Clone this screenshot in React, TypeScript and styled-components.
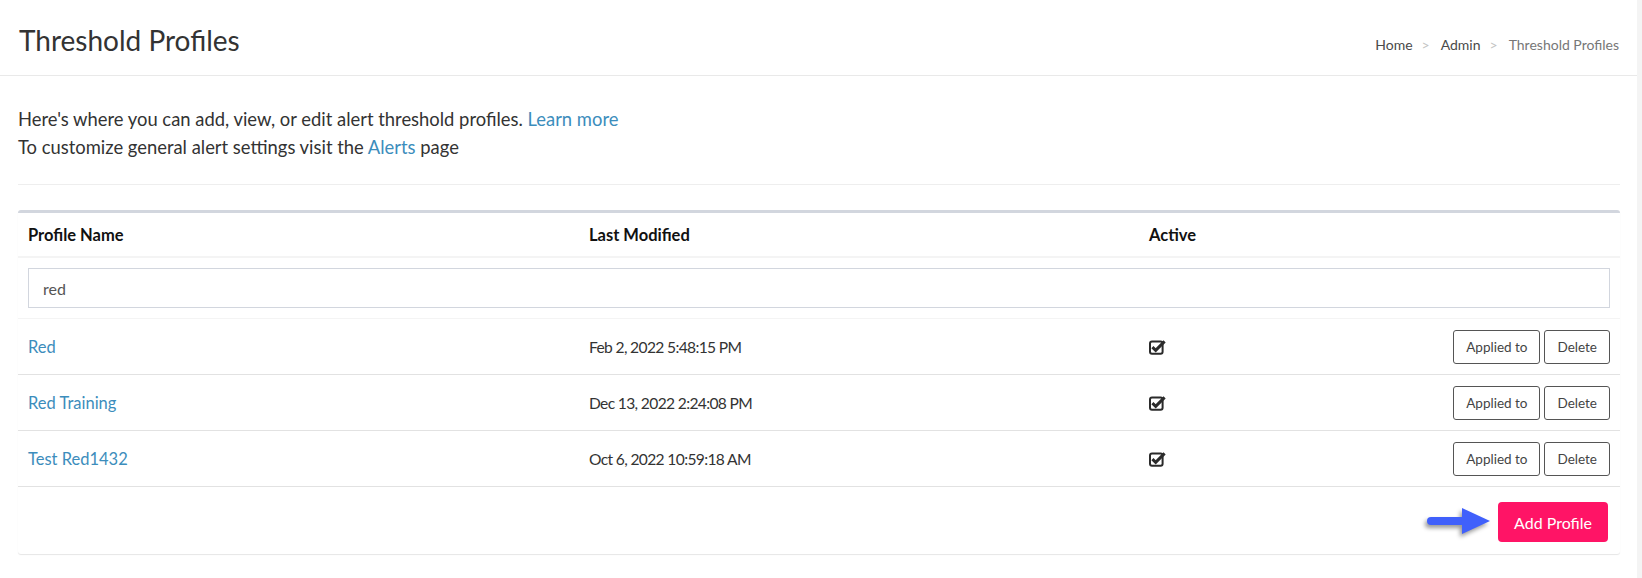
import React from "react";
import styled, { createGlobalStyle } from "styled-components";

const GlobalStyle = createGlobalStyle`
  html, body { margin: 0; padding: 0; background: #ffffff; }
  body { font-family: "Lato", "Open Sans", sans-serif; color: #333333; }
  * { box-sizing: border-box; }
`;

const Page = styled.div`
  display: flex;
  min-height: 578px;
`;

const Main = styled.main`
  flex: 1;
  background: #ffffff;
`;

const Strip = styled.div`
  width: 5px;
  background: #f4f4f4;
`;

const ContentHeader = styled.header`
  display: flex;
  align-items: center;
  justify-content: space-between;
  height: 76px;
  padding: 8px 18px 0 19px;
  border-bottom: 1px solid #e9e9e9;
`;

const Title = styled.h1`
  margin: 0 0 4px;
  font-size: 28px;
  font-weight: 400;
  color: #333333;
`;

const Crumbs = styled.ol`
  display: flex;
  align-items: center;
  margin: 6px 0 0;
  padding: 0;
  list-style: none;
  font-size: 14px;
`;

const Crumb = styled.li<{ $active?: boolean }>`
  color: ${(p) => (p.$active ? "#777777" : "#4a4a4a")};
  &:not(:first-child)::before {
    content: ">";
    color: #c4c4c4;
    padding: 0 11px 0 9px;
  }
`;

const Content = styled.section`
  padding: 0 17px 0 18px;
`;

const Intro = styled.div`
  padding: 29px 0 23px;
  font-size: 18.4px;
  line-height: 28px;
  color: #333333;
  border-bottom: 1px solid #eeeeee;
`;

const Line = styled.p`
  margin: 0;
`;

const Link = styled.a`
  color: #3c8dbc;
  text-decoration: none;
`;

const Box = styled.div`
  margin-top: 25px;
  border-top: 3px solid #d2d6de;
  border-radius: 3px;
  background: #ffffff;
  box-shadow: 0 1px 1px rgba(0, 0, 0, 0.1);
`;

const Grid = styled.div<{ $divider: string; $height: number; $borderW?: number }>`
  display: grid;
  grid-template-columns: 561px 560px 1fr auto;
  align-items: center;
  height: ${(p) => p.$height}px;
  border-bottom: ${(p) => p.$borderW ?? 1}px solid ${(p) => p.$divider};
`;

const HeadCell = styled.div`
  padding: 0 10px;
  font-size: 16.5px;
  font-weight: 700;
  color: #111111;
`;

const Cell = styled.div<{ $tight?: boolean }>`
  padding: 0 10px;
  font-size: ${(p) => (p.$tight ? "15.6px" : "16.5px")};
  letter-spacing: ${(p) => (p.$tight ? "-0.65px" : "0")};
  color: #333333;
  display: flex;
  align-items: center;
`;

const FilterRow = styled.div`
  padding: 10px 10px;
  border-bottom: 1px solid #f4f4f4;
`;

const FilterInput = styled.input`
  display: block;
  width: 100%;
  height: 40px;
  padding: 0 14px;
  border: 1px solid #d2d6de;
  border-radius: 0;
  font-family: inherit;
  font-size: 16px;
  color: #555555;
  outline: none;
`;

const Actions = styled.div`
  display: flex;
  gap: 4px;
  padding: 0 10px;
`;

const OutlineButton = styled.button`
  height: 34px;
  padding: 0 12px;
  background: #ffffff;
  border: 1px solid #555555;
  border-radius: 3px;
  font-family: inherit;
  font-size: 13.5px;
  color: #444444;
  cursor: pointer;
`;

const Footer = styled.div`
  display: flex;
  align-items: center;
  justify-content: flex-end;
  gap: 6px;
  padding: 15px 12px 12px;
`;

const AddButton = styled.button`
  height: 40px;
  padding: 0 16px;
  background: #ff1466;
  border: none;
  border-radius: 4px;
  font-family: inherit;
  font-size: 16px;
  color: #ffffff;
  cursor: pointer;
`;

const ArrowSvg = styled.svg`
  display: block;
  filter: drop-shadow(-2px 3px 2px rgba(0, 0, 0, 0.4));
`;

const CheckIcon = () => (
  <svg width="17" height="16" viewBox="0 0 17 16" aria-hidden="true">
    <rect x="1" y="2.6" width="12.6" height="12.2" rx="2" fill="none" stroke="#2b2b2b" strokeWidth="2" />
    <path d="M3.4 8.2 L6.7 11.4 L15.6 2.4" fill="none" stroke="#2b2b2b" strokeWidth="3" strokeLinejoin="miter" />
  </svg>
);

const Arrow = () => (
  <ArrowSvg width="66" height="32" viewBox="0 0 66 32" aria-hidden="true">
    <rect x="1" y="11" width="40" height="8" rx="4" fill="#4060fb" />
    <path d="M36 2 L64 15 L36 28 Z" fill="#4060fb" />
  </ArrowSvg>
);

const rows = [
  { name: "Red", date: "Feb 2, 2022 5:48:15 PM" },
  { name: "Red Training", date: "Dec 13, 2022 2:24:08 PM" },
  { name: "Test Red1432", date: "Oct 6, 2022 10:59:18 AM" },
];

export default function App() {
  return (
    <>
      <GlobalStyle />
      <Page>
        <Main>
          <ContentHeader>
            <Title>Threshold Profiles</Title>
            <Crumbs>
              <Crumb>Home</Crumb>
              <Crumb>Admin</Crumb>
              <Crumb $active>Threshold Profiles</Crumb>
            </Crumbs>
          </ContentHeader>
          <Content>
            <Intro>
              <Line>
                Here's where you can add, view, or edit alert threshold profiles.{" "}
                <Link href="#">Learn more</Link>
              </Line>
              <Line>
                To customize general alert settings visit the <Link href="#">Alerts</Link> page
              </Line>
            </Intro>
            <Box>
              <Grid $divider="#f4f4f4" $height={45} $borderW={2}>
                <HeadCell>Profile Name</HeadCell>
                <HeadCell>Last Modified</HeadCell>
                <HeadCell>Active</HeadCell>
                <span />
              </Grid>
              <FilterRow>
                <FilterInput defaultValue="red" />
              </FilterRow>
              {rows.map((r) => (
                <Grid key={r.name} $divider="#e2e2e2" $height={56}>
                  <Cell>
                    <Link href="#">{r.name}</Link>
                  </Cell>
                  <Cell $tight>{r.date}</Cell>
                  <Cell>
                    <CheckIcon />
                  </Cell>
                  <Actions>
                    <OutlineButton>Applied to</OutlineButton>
                    <OutlineButton>Delete</OutlineButton>
                  </Actions>
                </Grid>
              ))}
              <Footer>
                <Arrow />
                <AddButton>Add Profile</AddButton>
              </Footer>
            </Box>
          </Content>
        </Main>
        <Strip />
      </Page>
    </>
  );
}
